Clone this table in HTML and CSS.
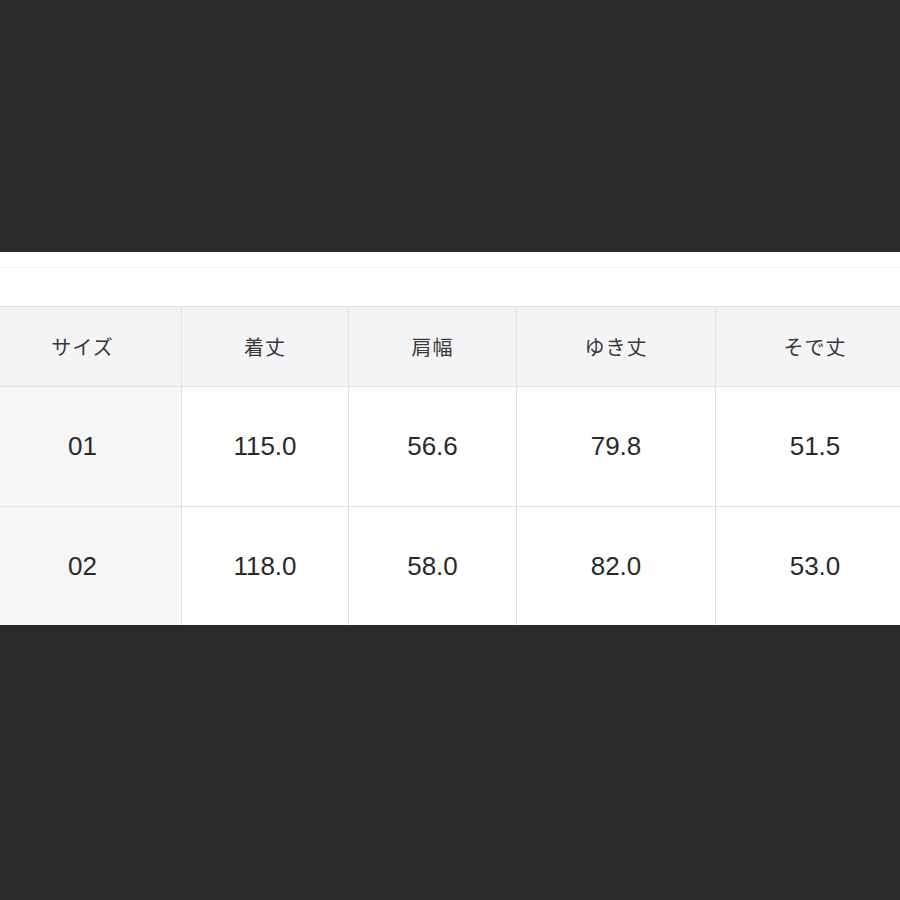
FILE: index.html
```html
<!DOCTYPE html>
<html lang="ja">
<head>
<meta charset="utf-8">
<link rel="stylesheet" href="styles.css">
</head>
<body>
<div class="top"></div>
<div class="band">
  <div class="band-line"></div>
  <table class="size-table">
    <thead>
      <tr>
        <th class="c1">サイズ</th>
        <th class="c2">着丈</th>
        <th class="c3">肩幅</th>
        <th class="c4">ゆき丈</th>
        <th class="c5">そで丈</th>
      </tr>
    </thead>
    <tbody>
      <tr>
        <td class="label">01</td>
        <td>115.0</td>
        <td>56.6</td>
        <td>79.8</td>
        <td>51.5</td>
      </tr>
      <tr>
        <td class="label">02</td>
        <td>118.0</td>
        <td>58.0</td>
        <td>82.0</td>
        <td>53.0</td>
      </tr>
    </tbody>
  </table>
</div>
</body>
</html>
```
FILE: styles.css
```css
html, body {
  margin: 0;
  padding: 0;
  background: #2a2a2a;
  width: 900px;
  height: 900px;
  overflow: hidden;
}
.top {
  height: 252px;
}
.band {
  background: #ffffff;
  height: 373px;
  overflow: hidden;
}
.band-line {
  margin-top: 15px;
  height: 1px;
  background: #ededef;
}
.size-table {
  margin-top: 38px;
  margin-left: -17px;
  border-collapse: collapse;
  table-layout: fixed;
  width: 929px;
  font-family: "Liberation Sans", "Noto Sans CJK JP", sans-serif;
  color: #2a2a2a;
}
.size-table th,
.size-table td {
  border: 1px solid #e1e1e4;
  text-align: center;
  padding: 0;
}
.size-table th {
  background: #f4f4f6;
  height: 79px;
  font-family: "Noto Sans CJK JP", sans-serif;
  font-weight: 400;
  font-size: 20px;
  color: #383838;
  letter-spacing: 1px;
}
.size-table td {
  height: 119px;
  font-size: 26px;
  background: #ffffff;
}
.size-table td.label {
  background: #f6f6f6;
}
.c1 { width: 197px; }
.c2 { width: 166px; }
.c3 { width: 167px; }
.c4 { width: 198px; }
.c5 { width: 198px; }
```
